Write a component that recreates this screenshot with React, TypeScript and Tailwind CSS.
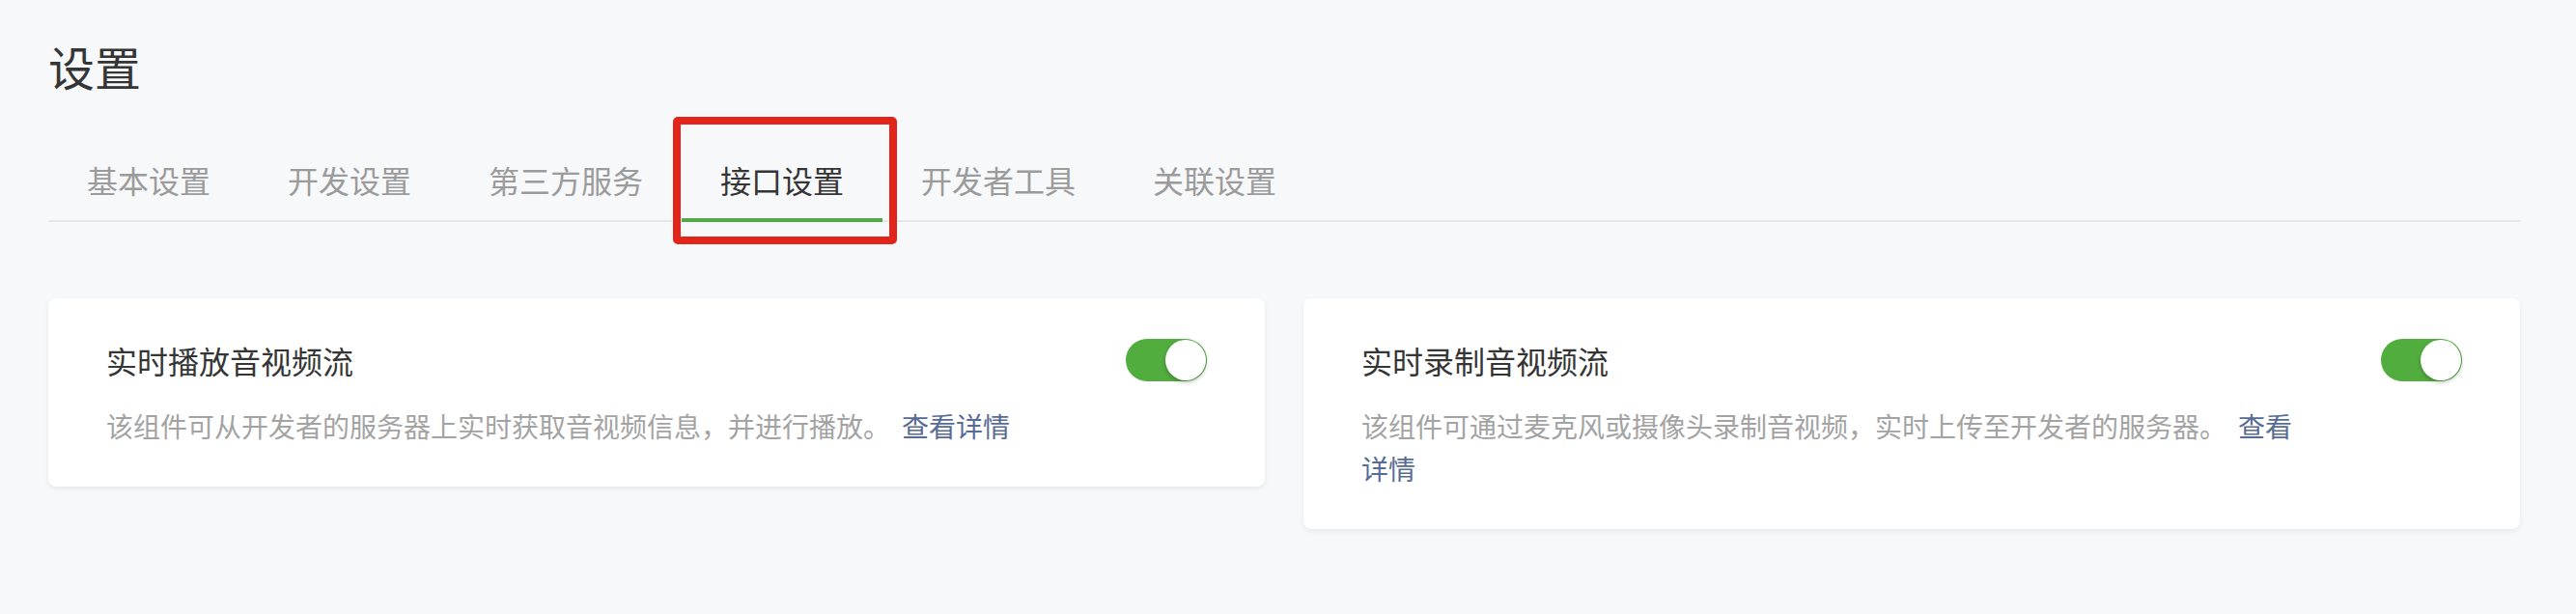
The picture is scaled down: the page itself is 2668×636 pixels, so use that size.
const font = {
  fontFamily: '"Noto Sans CJK SC", "Noto Sans", sans-serif',
};

const tabs = ["基本设置", "开发设置", "第三方服务", "接口设置", "开发者工具", "关联设置"];
const activeTab = "接口设置";

// on-state switch, like the weui one
function Toggle() {
  return (
    <div className="relative shrink-0 mt-[2px] ml-[80px] w-[84px] h-[44px] rounded-full bg-[#52ad3f]">
      <span className="absolute right-[1px] top-[1px] w-[42px] h-[42px] rounded-full bg-white shadow-[0_2px_4px_rgba(0,0,0,0.25)]" />
    </div>
  );
}

function ServiceCard({ title, desc }: { title: string; desc: string }) {
  return (
    <div className="bg-white rounded-[8px] shadow-[0_2px_5px_rgba(0,0,0,0.07)] px-[60px] pt-[40px] pb-[41px] flex">
      <div className="flex-1 min-w-0">
        <div className="text-[32px] leading-[48px] text-[#353535]">{title}</div>
        <p className="mt-[22px] text-[28px] leading-[44px] text-[#a3a3a3]">
          {desc}
          <a href="#" className="ml-[12px] text-[#576b95]">
            查看详情
          </a>
        </p>
      </div>
      <Toggle />
    </div>
  );
}

export default function App() {
  return (
    <div style={font} className="min-h-[636px] bg-[#f7f8fa] pl-[50px] pr-[58px] pt-[44px]">
      <h1 className="text-[48px] leading-[48px] font-normal text-[#353535]">设置</h1>

      <div className="mt-[70px] flex border-b-2 border-[#e6e6e6]">
        {tabs.map((t) =>
          t === activeTab ? (
            <div
              key={t}
              className="relative px-[40px] pb-[16px] -mb-[2px] border-b-4 border-[#52a846] text-[32px] leading-[48px] text-[#353535]"
            >
              {t}
              {/* highlight frame drawn over the screenshot */}
              <div className="absolute -left-[9px] -right-[15px] -top-[41px] -bottom-[27px] border-[8px] border-[#e1251b] rounded-[5px]" />
            </div>
          ) : (
            <div
              key={t}
              className="px-[40px] pb-[16px] -mb-[2px] border-b-4 border-transparent text-[32px] leading-[48px] text-[#9b9b9b]"
            >
              {t}
            </div>
          )
        )}
      </div>

      <div className="mt-[79px] grid grid-cols-2 gap-[40px] items-start">
        <ServiceCard
          title="实时播放音视频流"
          desc="该组件可从开发者的服务器上实时获取音视频信息，并进行播放。"
        />
        <ServiceCard
          title="实时录制音视频流"
          desc="该组件可通过麦克风或摄像头录制音视频，实时上传至开发者的服务器。"
        />
      </div>
    </div>
  );
}
